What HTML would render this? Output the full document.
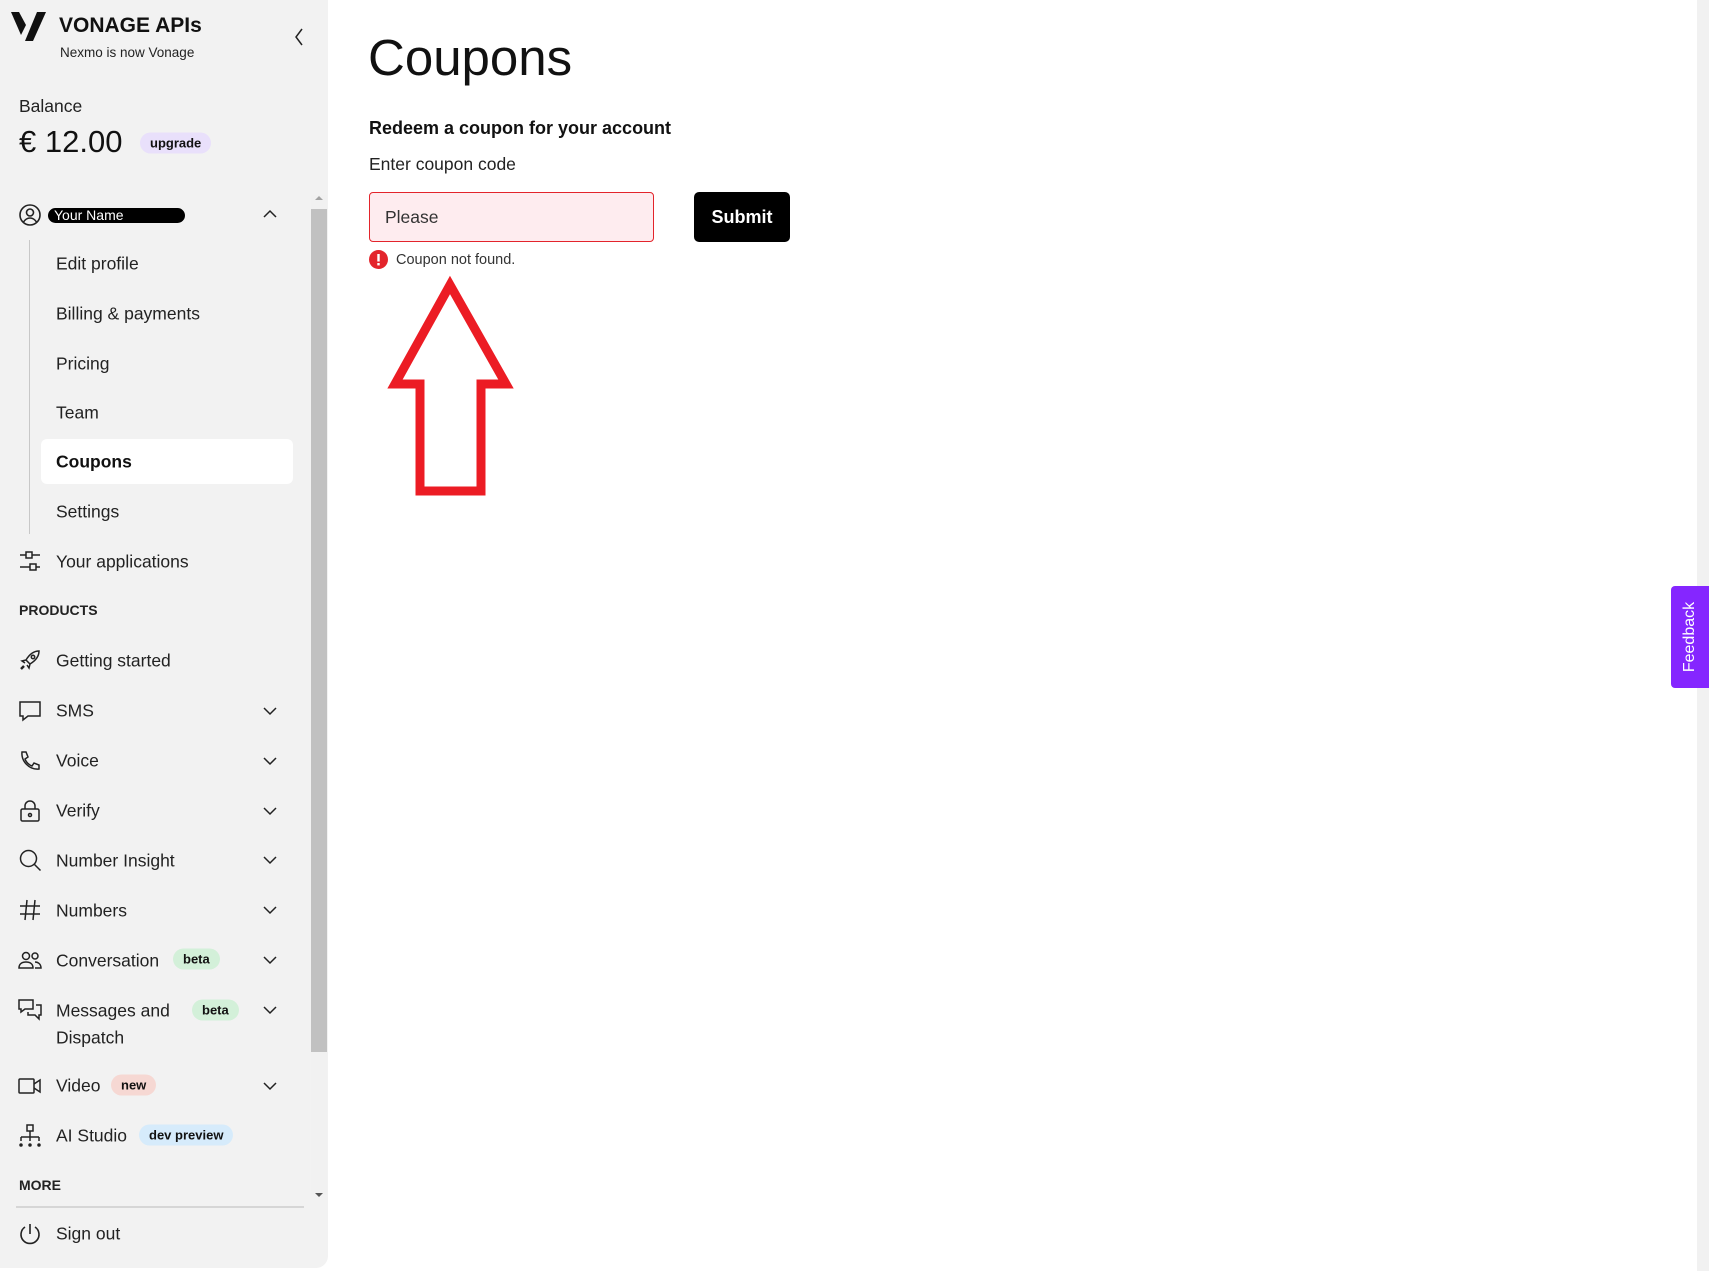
<!DOCTYPE html>
<html><head><meta charset="utf-8"><style>
*{margin:0;padding:0;box-sizing:border-box}
body{width:1709px;height:1271px;position:relative;background:#fff;font-family:"Liberation Sans",Arial,sans-serif;color:#1a1a1a;overflow:hidden}
.a{position:absolute;white-space:nowrap}
#sb{position:absolute;left:0;top:0;width:328px;height:1268px;background:#f2f2f2;border-bottom-right-radius:12px}
.nav{position:absolute;left:56px;font-size:17.5px;color:#222;transform:translateY(-50%)}
.ic{position:absolute;left:18px;width:24px;height:24px;transform:translateY(-50%)}
.ch{position:absolute;left:262px;width:16px;height:10px;transform:translateY(-50%)}
.pill{position:absolute;font-size:13px;font-weight:bold;border-radius:12px;padding:3px 10px;transform:translateY(-50%);color:#111}
svg{overflow:visible}
</style></head><body>
<div id="sb">
<svg class="a" style="left:11px;top:12px" width="36" height="30" viewBox="0 0 36 30"><path d="M0 0h8l7 13-5 10z" fill="#111"/><path d="M26 0h9L22 29h-8z" fill="#111"/></svg>
<div class="a" style="left:59px;top:14px;font-size:21px;font-weight:bold;color:#111">VONAGE APIs</div>
<div class="a" style="left:60px;top:45px;font-size:13.5px;color:#222">Nexmo is now Vonage</div>
<svg class="a" style="left:294px;top:28px" width="10" height="18"><path d="M8 1L2 9l6 8" stroke="#222" stroke-width="1.5" fill="none"/></svg>
<div class="a" style="left:19px;top:96px;font-size:17.5px;color:#222">Balance</div>
<div class="a" style="left:19px;top:124px;font-size:31px;color:#111">€ 12.00</div>
<div class="pill" style="left:140px;top:143px;background:#e9e0fb">upgrade</div>
<div class="a" style="left:311px;top:195px;width:16px;height:1000px;background:#f1f1f1"></div>
<div class="a" style="left:311px;top:209px;width:16px;height:843px;background:#c1c1c1"></div>
<svg class="a" style="left:314px;top:195px" width="10" height="6"><path d="M1 5l4-4 4 4z" fill="#a3a3a3"/></svg>
<svg class="a" style="left:314px;top:1192px" width="10" height="6"><path d="M1 1l4 4 4-4z" fill="#555"/></svg>
<svg class="ic" style="top:215px" viewBox="0 0 24 24"><circle cx="12" cy="12" r="10" stroke="#222" stroke-width="1.6" fill="none"/><circle cx="12" cy="9.5" r="3.5" stroke="#222" stroke-width="1.6" fill="none"/><path d="M5.5 19c2-3 4-4 6.5-4s4.5 1 6.5 4" stroke="#222" stroke-width="1.6" fill="none"/></svg>
<div class="a" style="left:48px;top:208px;width:137px;height:15px;background:#000;border-radius:8px;color:#fff;font-size:14px;line-height:15px;padding-left:6px">Your Name</div>
<svg class="ch" style="top:214px" viewBox="0 0 16 10"><path d="M2 8l6-6 6 6" stroke="#222" stroke-width="1.5" fill="none"/></svg>
<div class="a" style="left:29px;top:240px;width:1px;height:294px;background:#c8c8c8"></div>
<div class="nav" style="top:264px">Edit profile</div>
<div class="nav" style="top:314px">Billing &amp; payments</div>
<div class="nav" style="top:364px">Pricing</div>
<div class="nav" style="top:413px">Team</div>
<div class="a" style="left:41px;top:439px;width:252px;height:45px;background:#fff;border-radius:6px"></div>
<div class="nav" style="top:462px;font-weight:bold;color:#111">Coupons</div>
<div class="nav" style="top:512px">Settings</div>
<svg class="ic" style="top:561px" viewBox="0 0 24 24" fill="none" stroke="#222" stroke-width="1.5"><path d="M2 6h6M14 6h8M2 18h10M18 18h4"/><rect x="8" y="3" width="6" height="6"/><rect x="12" y="15" width="6" height="6"/></svg>
<div class="nav" style="top:562px">Your applications</div>
<div class="a" style="left:19px;top:602px;font-size:14px;font-weight:bold;color:#222">PRODUCTS</div>
<svg class="ic" style="top:660px" viewBox="0 0 24 24" fill="none" stroke="#222" stroke-width="1.5"><path d="M21 3c-6 0-10 4-13 9l4 4c5-3 9-7 9-13zM8 12l-4 1 3 2M12 16l-1 4-2-3"/><circle cx="15" cy="9" r="1.7"/><path d="M6 18l-3 3" stroke-width="2.5"/></svg>
<div class="nav" style="top:661px">Getting started</div>
<svg class="ic" style="top:711px" viewBox="0 0 24 24" fill="none" stroke="#222" stroke-width="1.5"><path d="M2 3h20v14H10l-5 4v-4H2z"/></svg>
<div class="nav" style="top:711px">SMS</div>
<svg class="ic" style="top:761px" viewBox="0 0 24 24" fill="none" stroke="#222" stroke-width="1.5"><path d="M4 3l4 0 2 5-3 2c1 3 4 6 7 7l2-3 5 2v4c-10 1-18-8-17-17z"/></svg>
<div class="nav" style="top:761px">Voice</div>
<svg class="ic" style="top:811px" viewBox="0 0 24 24" fill="none" stroke="#222" stroke-width="1.5"><rect x="3" y="10" width="18" height="12" rx="1.5"/><path d="M7 10V7a5 5 0 0 1 10 0v3"/><circle cx="12" cy="16" r="1.5"/></svg>
<div class="nav" style="top:811px">Verify</div>
<svg class="ic" style="top:860px" viewBox="0 0 24 24" fill="none" stroke="#222" stroke-width="1.5"><circle cx="10.5" cy="10.5" r="8"/><path d="M16.5 16.5l6 6"/></svg>
<div class="nav" style="top:861px">Number Insight</div>
<svg class="ic" style="top:910px" viewBox="0 0 24 24" fill="none" stroke="#222" stroke-width="1.5"><path d="M9 2L7 22M17 2l-2 20M2 8h20M2 16h20"/></svg>
<div class="nav" style="top:911px">Numbers</div>
<svg class="ic" style="top:960px" viewBox="0 0 24 24" fill="none" stroke="#222" stroke-width="1.5"><circle cx="8" cy="8" r="3.5"/><path d="M1 20c0-4 3-6 7-6s7 2 7 6z"/><circle cx="17" cy="8" r="3"/><path d="M17 14c3 0 6 2 6 6h-6"/></svg>
<div class="nav" style="top:961px">Conversation</div>
<div class="pill" style="left:173px;top:959px;background:#d3f0d9">beta</div>
<svg class="ic" style="top:1010px" viewBox="0 0 24 24" fill="none" stroke="#222" stroke-width="1.5"><path d="M1 2h14v9H7l-4 3v-3H1zM18 7h5v10h-2v4l-4-4h-7v-3"/></svg>
<div class="nav" style="top:1011px">Messages and</div>
<div class="nav" style="top:1038px">Dispatch</div>
<div class="pill" style="left:192px;top:1010px;background:#d3f0d9">beta</div>
<svg class="ic" style="top:1086px" viewBox="0 0 24 24" fill="none" stroke="#222" stroke-width="1.5"><rect x="1" y="5" width="15" height="14" rx="1"/><path d="M16 10l6-4v12l-6-4"/></svg>
<div class="nav" style="top:1086px">Video</div>
<div class="pill" style="left:111px;top:1085px;background:#f6d8d3">new</div>
<svg class="ic" style="top:1136px" viewBox="0 0 24 24" fill="none" stroke="#222" stroke-width="1.5"><rect x="9" y="1" width="6" height="6"/><path d="M12 7v6M3 13h18M3 13v4M12 13v4M21 13v4"/><circle cx="3" cy="21" r="1" fill="#222"/><circle cx="12" cy="21" r="1" fill="#222"/><circle cx="21" cy="21" r="1" fill="#222"/></svg>
<div class="nav" style="top:1136px">AI Studio</div>
<div class="pill" style="left:139px;top:1135px;background:#d6ebfb">dev preview</div>
<div class="a" style="left:19px;top:1177px;font-size:14px;font-weight:bold;color:#222">MORE</div>
<div class="a" style="left:16px;top:1206px;width:288px;height:2px;background:#d6d6d6"></div>
<svg class="ic" style="top:1234px" viewBox="0 0 24 24" fill="none" stroke="#222" stroke-width="1.6"><path d="M12 2v10M7 5a9 9 0 1 0 10 0"/></svg>
<div class="nav" style="top:1234px">Sign out</div>
<svg class="ch" style="top:711px" viewBox="0 0 16 10"><path d="M2 2l6 6 6-6" stroke="#222" stroke-width="1.5" fill="none"/></svg>
<svg class="ch" style="top:761px" viewBox="0 0 16 10"><path d="M2 2l6 6 6-6" stroke="#222" stroke-width="1.5" fill="none"/></svg>
<svg class="ch" style="top:811px" viewBox="0 0 16 10"><path d="M2 2l6 6 6-6" stroke="#222" stroke-width="1.5" fill="none"/></svg>
<svg class="ch" style="top:860px" viewBox="0 0 16 10"><path d="M2 2l6 6 6-6" stroke="#222" stroke-width="1.5" fill="none"/></svg>
<svg class="ch" style="top:910px" viewBox="0 0 16 10"><path d="M2 2l6 6 6-6" stroke="#222" stroke-width="1.5" fill="none"/></svg>
<svg class="ch" style="top:960px" viewBox="0 0 16 10"><path d="M2 2l6 6 6-6" stroke="#222" stroke-width="1.5" fill="none"/></svg>
<svg class="ch" style="top:1010px" viewBox="0 0 16 10"><path d="M2 2l6 6 6-6" stroke="#222" stroke-width="1.5" fill="none"/></svg>
<svg class="ch" style="top:1086px" viewBox="0 0 16 10"><path d="M2 2l6 6 6-6" stroke="#222" stroke-width="1.5" fill="none"/></svg>
</div>

<div class="a" style="left:368px;top:28px;font-size:51px;color:#111">Coupons</div>
<div class="a" style="left:369px;top:118px;font-size:18px;font-weight:bold;color:#111">Redeem a coupon for your account</div>
<div class="a" style="left:369px;top:154px;font-size:17.5px;color:#222">Enter coupon code</div>
<div class="a" style="left:369px;top:192px;width:285px;height:50px;border:1.5px solid #e3242b;background:#feecef;border-radius:4px;font-size:17.5px;color:#333;padding:14px 0 0 15px">Please</div>
<div class="a" style="left:694px;top:192px;width:96px;height:50px;background:#000;border-radius:5px;color:#fff;font-weight:bold;font-size:18px;text-align:center;line-height:50px">Submit</div>
<svg class="a" style="left:369px;top:250px" width="19" height="19"><circle cx="9.5" cy="9.5" r="9.5" fill="#e3242b"/><rect x="8.3" y="4" width="2.4" height="7.5" fill="#fff"/><rect x="8.3" y="13" width="2.4" height="2.4" fill="#fff"/></svg>
<div class="a" style="left:396px;top:252px;font-size:14.5px;color:#333">Coupon not found.</div>
<svg class="a" style="left:380px;top:270px" width="140" height="230"><polygon points="70,15 126,114 101,114 101,221 40,221 40,114 15,114" fill="none" stroke="#ec1c24" stroke-width="9"/></svg>
<div class="a" style="left:1697px;top:0;width:12px;height:1271px;background:#f1f1f1"></div>
<div class="a" style="left:1671px;top:586px;width:38px;height:102px;background:#8526ff;border-radius:4px 0 0 4px"></div>
<div class="a" style="left:1690px;top:637px;transform:translate(-50%,-50%) rotate(-90deg);color:#fff;font-size:16px">Feedback</div>
</body></html>
